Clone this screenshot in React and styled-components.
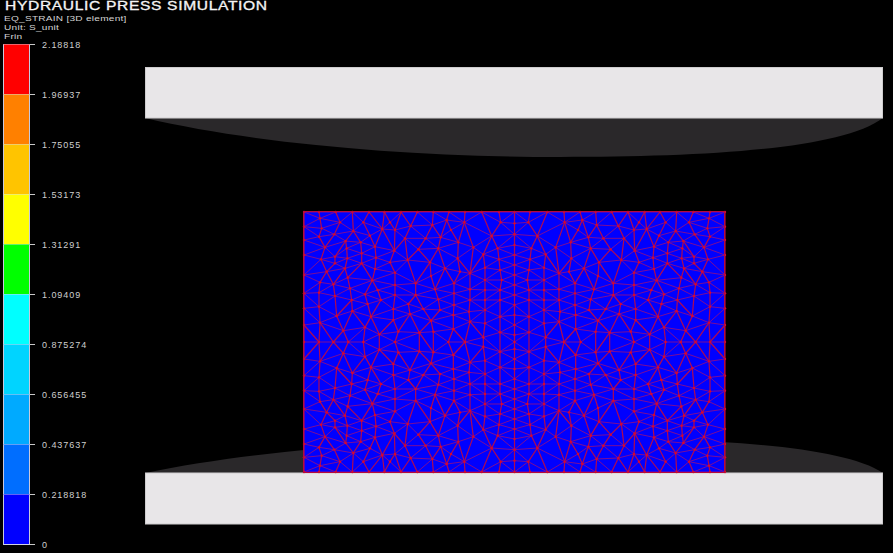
import React from 'react';
import styled, { createGlobalStyle } from 'styled-components';

const GlobalStyle = createGlobalStyle`
	html, body {
		margin: 0;
		background: #000;
		overflow: hidden;
	}
`;

const Page = styled.div`
	width: 893px;
	height: 553px;
	display: grid;
	grid-template-columns: 145px 748px;
	grid-template-rows: 44px 509px;
	background: #000;
	font-family: 'Liberation Sans', Arial, sans-serif;
	overflow: hidden;
`;

const Header = styled.header`
	grid-column: 1 / 3;
	padding-left: 4px;
	color: #d4d4d4;
`;

const Title = styled.h1`
	width: max-content;
	margin: 0 0 1px 1px;
	font-size: 12px;
	line-height: 13px;
	font-weight: 400;
	letter-spacing: 0.5px;
	color: #f4f4f4;
	-webkit-text-stroke: 0.3px #f4f4f4;
	transform: scaleX(1.3);
	transform-origin: left center;
`;

const Info = styled.div`
	width: max-content;
	font-size: 8px;
	line-height: 9px;
	letter-spacing: 0.2px;
	transform: scaleX(1.26);
	transform-origin: left center;
`;

const Legend = styled.div`
	display: flex;
	flex-direction: column;
	padding-left: 3px;
`;

const ScaleRow = styled.div`
	display: flex;
	align-items: flex-start;
	height: ${(p) => (p.$last ? '1px' : '50px')};
`;

const Swatch = styled.div`
	width: 27px;
	height: 100%;
	background: ${(p) => p.$color};
	border-left: 1px solid #c8c8dc;
	border-right: 1px solid #c8c8dc;
	border-top: 1px solid rgba(220, 220, 235, 0.45);
	box-sizing: border-box;
`;

const Tick = styled.div`
	width: 5px;
	height: 1px;
	background: #c8c8c8;
`;

const ScaleValue = styled.span`
	margin: -4px 0 0 7px;
	font-size: 9px;
	line-height: 10px;
	letter-spacing: 0.95px;
	color: #cfcfcf;
`;

const Scene = styled.svg`
	display: block;
	width: 748px;
	height: 509px;
`;

const scale = [
	['2.18818', '#ff0000'],
	['1.96937', '#ff8000'],
	['1.75055', '#ffc400'],
	['1.53173', '#ffff00'],
	['1.31291', '#00ff00'],
	['1.09409', '#00ffff'],
	['0.875274', '#00d4ff'],
	['0.656455', '#00aaff'],
	['0.437637', '#006eff'],
	['0.218818', '#0000ff'],
];

// one quarter of the mesh, the other three are mirrored from it
const quarter = [
	[25, 20], [72, 20], [122, 20], [172, 20], [222, 20], [268, 20], [318, 20], [367, 20], [415, 20], [462, 20], [510, 20], [560, 20], [612, 20], [660, 20],
	[75, 40], [135, 52], [205, 52], [285, 52], [347, 63], [412, 60], [455, 45], [508, 52], [617, 52], [660, 55],
	[25, 65], [80, 70], [175, 78], [262, 72], [300, 75], [468, 75], [118, 88], [72, 95], [225, 92], [330, 100], [392, 100], [437, 97], [590, 93], [660, 88],
	[25, 105], [152, 108], [197, 112], [490, 112], [90, 127], [155, 130], [240, 125], [298, 137], [370, 133], [430, 130], [535, 127], [608, 130], [660, 120],
	[25, 150], [200, 145], [565, 148], [120, 155], [78, 163], [157, 160], [243, 158], [338, 165], [488, 160], [612, 163], [660, 150],
	[285, 172], [405, 172], [120, 175], [200, 175], [660, 180],
	[150, 190], [240, 192], [450, 190], [525, 205], [95, 200], [300, 203], [495, 200], [570, 188], [615, 195],
	[25, 210], [158, 218], [232, 226], [408, 213], [570, 225], [620, 225], [660, 210],
	[75, 232], [115, 238], [300, 240], [362, 235], [477, 235], [72, 263], [248, 255], [165, 250], [420, 253], [525, 253], [570, 255], [615, 255], [660, 240],
	[25, 265], [120, 273], [170, 285], [210, 268], [258, 285], [300, 270], [362, 270], [430, 283], [477, 265], [525, 285], [570, 285], [615, 285], [660, 270],
	[72, 305], [218, 297], [340, 297], [125, 333], [172, 318], [295, 312], [385, 312], [435, 315], [477, 300], [570, 315], [660, 300],
	[25, 310], [75, 353], [228, 335], [345, 327], [408, 347], [475, 330], [522, 320], [615, 335], [660, 330],
	[145, 377], [210, 367], [295, 345], [475, 372], [525, 350], [570, 355], [660, 360],
	[25, 360], [72, 411], [115, 405], [160, 411], [253, 388], [310, 380], [373, 383], [415, 380], [510, 408], [565, 397], [615, 382], [660, 390],
	[25, 411], [205, 411], [300, 411], [460, 411], [660, 411],
];

const buildNodes = () => {
	const seen = new Set();
	const nodes = [];
	quarter.forEach(([zx, zy]) => {
		// snap to the edges and the two mirror lines
		const x = zx === 25 ? 304 : zx === 660 ? 514.5 : 295 + zx / 3;
		const y = zy === 20 ? 212 : zy >= 400 ? 342 : 205 + zy / 3;
		[[x, y], [1029 - x, y], [x, 684 - y], [1029 - x, 684 - y]].forEach(([a, b]) => {
			const key = `${a.toFixed(1)}_${b.toFixed(1)}`;
			if (!seen.has(key)) {
				seen.add(key);
				nodes.push([a, b]);
			}
		});
	});
	return nodes;
};

// plain Bowyer-Watson, returns the unique edges of the triangulation
const triangulate = (nodes) => {
	const pts = [...nodes, [-5000, -5000], [6000, -5000], [500, 7000]];
	const n = nodes.length;
	let tris = [[n, n + 1, n + 2]];
	const inCircle = ([a, b, c], p) => {
		const ax = pts[a][0] - p[0], ay = pts[a][1] - p[1];
		const bx = pts[b][0] - p[0], by = pts[b][1] - p[1];
		const cx = pts[c][0] - p[0], cy = pts[c][1] - p[1];
		const det =
			(ax * ax + ay * ay) * (bx * cy - cx * by) -
			(bx * bx + by * by) * (ax * cy - cx * ay) +
			(cx * cx + cy * cy) * (ax * by - bx * ay);
		const o = (pts[b][0] - pts[a][0]) * (pts[c][1] - pts[a][1]) - (pts[b][1] - pts[a][1]) * (pts[c][0] - pts[a][0]);
		return o > 0 ? det > 0 : det < 0;
	};
	nodes.forEach((p, i) => {
		const bad = tris.filter((t) => inCircle(t, p));
		const count = {};
		bad.forEach(([a, b, c]) => {
			[[a, b], [b, c], [c, a]].forEach(([u, v]) => {
				const k = u < v ? `${u}_${v}` : `${v}_${u}`;
				count[k] = (count[k] || 0) + 1;
			});
		});
		tris = tris.filter((t) => !bad.includes(t));
		Object.keys(count).forEach((k) => {
			if (count[k] === 1) {
				const [u, v] = k.split('_').map(Number);
				tris.push([u, v, i]);
			}
		});
	});
	const edges = new Set();
	tris.forEach(([a, b, c]) => {
		[[a, b], [b, c], [c, a]].forEach(([u, v]) => {
			if (u < n && v < n) edges.add(u < v ? `${u}_${v}` : `${v}_${u}`);
		});
	});
	return [...edges].map((k) => k.split('_').map(Number));
};

const nodes = buildNodes();
const edges = triangulate(nodes);

// steep edges read as the strong column lines, shallow ones are fainter
const isSteep = ([a, b]) => Math.abs(nodes[a][1] - nodes[b][1]) > Math.abs(nodes[a][0] - nodes[b][0]);

const edgeLine = ([a, b]) => (
	<line key={`${a}-${b}`} x1={nodes[a][0]} y1={nodes[a][1]} x2={nodes[b][0]} y2={nodes[b][1]} />
);

const App = () => {
	return (
		<Page>
			<GlobalStyle />
			<Header>
				<Title>HYDRAULIC PRESS SIMULATION</Title>
				<Info>EQ_STRAIN [3D element]</Info>
				<Info>Unit: S_unit</Info>
				<Info>Frin</Info>
			</Header>
			<Legend>
				{scale.map(([value, color]) => (
					<ScaleRow key={value}>
						<Swatch $color={color} />
						<Tick />
						<ScaleValue>{value}</ScaleValue>
					</ScaleRow>
				))}
				<ScaleRow $last>
					<Swatch $color="#c8c8dc" />
					<Tick />
					<ScaleValue>0</ScaleValue>
				</ScaleRow>
			</Legend>
			<Scene viewBox="145 44 748 509">
				<path d="M145 118 C260 145 420 157 560 157 C700 157 840 150 883 118 Z" fill="#2a282a" />
				<rect x="145.5" y="67.5" width="737" height="50.5" fill="#e8e6e8" stroke="#cfcdcf" />
				<path d="M145 473 C260 449 420 438 560 438 C700 438 840 444 883 473 Z" fill="#2a282a" />
				<rect x="145.5" y="473" width="737" height="51" fill="#e8e6e8" stroke="#cfcdcf" />
				<rect x="304" y="212" width="421" height="260" fill="#0000ff" />
				<g stroke="#7c0c96" strokeWidth="1">
					{edges.filter((e) => !isSteep(e)).map(edgeLine)}
				</g>
				<g stroke="#b00a50" strokeWidth="1.2">
					{edges.filter(isSteep).map(edgeLine)}
				</g>
				<g fill="#d8082c">
					{nodes.map(([x, y]) => (
						<circle key={`${x}-${y}`} cx={x} cy={y} r="1.2" />
					))}
				</g>
				<rect x="303.5" y="211.5" width="421" height="261" fill="none" stroke="#b8083c" />
			</Scene>
		</Page>
	);
};

export default App;
